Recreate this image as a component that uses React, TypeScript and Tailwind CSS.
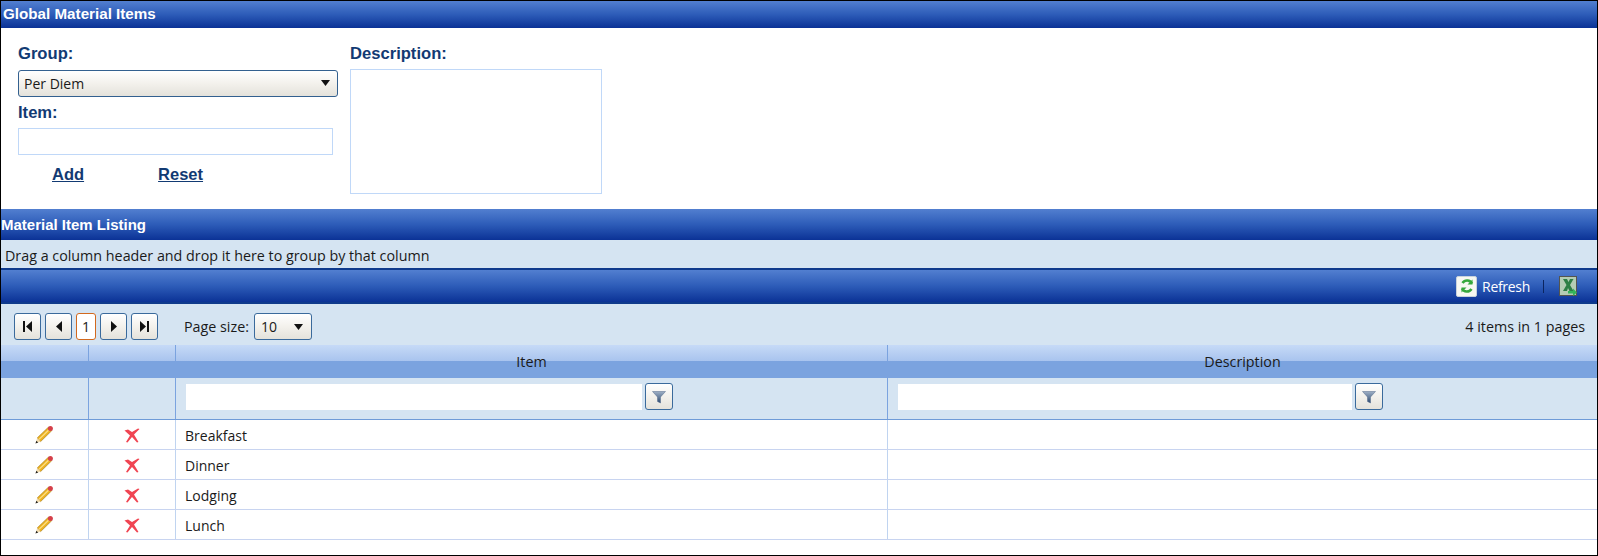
import { ReactNode } from 'react';

const labelClass = "text-[16.6px] font-bold leading-none text-[#123a73] font-['Liberation_Sans',sans-serif]";
const linkClass = "text-[16.5px] font-bold leading-none text-[#123a73] underline font-['Liberation_Sans',sans-serif]";
const barClass = 'bg-[linear-gradient(#527fd0,#2d5cb8_50%,#0b3296)]';
const buttonClass =
  'flex items-center rounded-[3px] border border-[#3a6a9c] bg-[linear-gradient(#ffffff,#f3f1ec_50%,#e4e2db)]';

const rows = ['Breakfast', 'Dinner', 'Lodging', 'Lunch'];

function Triangle({ dir }: { dir: 'left' | 'right' | 'down' }) {
  if (dir === 'down') {
    return (
      <svg width="9" height="6" viewBox="0 0 9 6">
        <path d="M0 0h9L4.500 6z" fill="#111" />
      </svg>
    );
  }
  return (
    <svg width="6" height="11" viewBox="0 0 6 11">
      <path d={dir === 'left' ? 'M6 0v11L0 5.500z' : 'M0 0v11L6 5.500z'} fill="#111" />
    </svg>
  );
}

function PageButton({ children }: { children: ReactNode }) {
  return <div className={`${buttonClass} h-[27px] w-[27px] justify-center`}>{children}</div>;
}

function FilterIcon() {
  return (
    <svg width="14" height="14" viewBox="0 0 14 14">
      <defs>
        <linearGradient id="funnel" x1="0" y1="0" x2="0" y2="1">
          <stop offset="0" stopColor="#9fb0c6" />
          <stop offset="1" stopColor="#2c4a70" />
        </linearGradient>
      </defs>
      <path d="M0.500 1.500h13L8.500 7v6l-3-1.500V7z" fill="url(#funnel)" stroke="#52688a" strokeWidth="0.500" />
    </svg>
  );
}

function Pencil() {
  return (
    <svg width="20" height="20" viewBox="0 0 20 20">
      <path d="M3.200 13 14.400 2.200l3.400 3.400L6.600 16.600z" fill="#eeb321" stroke="#a87a12" strokeWidth="0.700" />
      <path d="M5 14.400 15.800 4" stroke="#fbe08a" strokeWidth="1.200" />
      <path d="M3.200 13 1.500 18.500l5.100-1.900z" fill="#f3dcae" />
      <path d="M2.300 15.800 1.500 18.500l2.700-.9z" fill="#222" />
      <circle cx="16.400" cy="3.400" r="2.500" fill="#d5404a" />
    </svg>
  );
}

function RedX() {
  return (
    <svg width="16" height="15" viewBox="0 0 16 15">
      <path
        d="M0.500 2.500 4 1.500l4 2.500 6-3.500 1.500.5L10 6.500l4.500 7.500-1.500.5L8 9 3.500 14.500 2 14 6 7.500z"
        fill="#f04552"
      />
    </svg>
  );
}

function RefreshIcon() {
  return (
    <div className="flex h-[21px] w-[21px] items-center justify-center rounded-[2px] border border-[#c8d2dc] bg-[#f7f8f2]">
      <svg width="16" height="16" viewBox="0 0 16 16" fill="none" stroke="#36a83c" strokeWidth="2.600">
        <path d="M13 5.500A5.500 5.500 0 0 0 3.500 5" />
        <path d="M3 10.500A5.500 5.500 0 0 0 12.500 11" />
        <path d="M13.500 1.500v5h-5z" fill="#36a83c" stroke="none" />
        <path d="M2.500 14.500v-5h5z" fill="#36a83c" stroke="none" />
      </svg>
    </div>
  );
}

function ExcelIcon() {
  return (
    <svg width="18" height="20" viewBox="0 0 18 20">
      <rect x="0.500" y="0.500" width="17" height="19" fill="#b4ccb4" stroke="#55554f" />
      <path d="M4 3h4l1.500 3L11 3h3.500l-3.500 6 3.500 6h-4l-1.500-3L8 15H4l3.500-6z" fill="#2e7f45" />
      <path d="M9 15h5v-2.500l4 4-4 3.500v-2.500H9z" fill="#35b45a" />
    </svg>
  );
}

function FilterCell({ inputWidth }: { inputWidth: string }) {
  return (
    <div className="flex items-center gap-[3px] border-l border-[#7ba3df] pb-[4px] pl-[10px]">
      <div className={`h-[26px] bg-white ${inputWidth}`} />
      <div className={`${buttonClass} h-[27px] w-[28px] justify-center`}>
        <FilterIcon />
      </div>
    </div>
  );
}

export default function App() {
  return (
    <div className="box-border flex h-[556px] w-[1598px] flex-col overflow-hidden border border-black bg-white font-['Open_Sans',sans-serif] text-[14.3px] text-[#1a1a1a]">
      <div className={`${barClass} flex h-[27px] items-center pl-[2px] font-['Liberation_Sans',sans-serif] text-[15.2px] font-bold text-white`}>
        Global Material Items
      </div>

      <div className="flex h-[181px] pl-[17px] pt-[18px]">
        <div className="w-[320px]">
          <div className={labelClass}>Group:</div>
          <div className="mt-[7px] flex h-[27px] items-center justify-between rounded-[3px] border border-[#33608f] bg-[linear-gradient(#ffffff,#f3f1ec_50%,#e4e2db)] pl-[5px] pr-[7px]">
            <span className="text-[14px]">Per Diem</span>
            <Triangle dir="down" />
          </div>
          <div className={`${labelClass} mt-[8px]`}>Item:</div>
          <div className="mt-[7px] h-[27px] w-[315px] border border-[#c0d8f8]" />
          <div className="mt-[11px] flex pl-[34px]">
            <span className={linkClass}>Add</span>
            <span className={`${linkClass} ml-[74px]`}>Reset</span>
          </div>
        </div>
        <div className="ml-[12px]">
          <div className={labelClass}>Description:</div>
          <div className="mt-[6px] h-[125px] w-[252px] border border-[#c0d8f8]" />
        </div>
      </div>

      <div className={`${barClass} flex h-[31px] items-center pt-[1px] font-['Liberation_Sans',sans-serif] text-[15px] font-bold text-white`}>
        Material Item Listing
      </div>

      <div className="flex h-[28px] items-center bg-[#d5e4f2] pl-[4px] pt-[3px]">
        Drag a column header and drop it here to group by that column
      </div>

      <div className={`${barClass} flex h-[36px] items-center justify-end border-y-2 border-t-[#0f3a8c] border-b-[#0f3a8c] pr-[20px]`}>
        <RefreshIcon />
        <span className="ml-[5px] text-[14px] tracking-[-0.3px] text-white">Refresh</span>
        <div className="ml-[13px] h-[13px] w-px bg-[#0b2560]" />
        <div className="ml-[15px] flex">
          <ExcelIcon />
        </div>
      </div>

      <div className="flex h-[41px] items-center bg-[#d5e4f2] pl-[13px] pr-[12px] pt-[4px]">
        <div className="flex gap-[4px]">
          <PageButton>
            <svg width="9" height="11" viewBox="0 0 9 11">
              <path d="M0 0h2v11H0zM9 0v11L3 5.500z" fill="#111" />
            </svg>
          </PageButton>
          <PageButton>
            <Triangle dir="left" />
          </PageButton>
          <div className="flex h-[27px] w-[20px] items-center justify-center rounded-[3px] border border-[#d2691e] bg-white text-[14px]">
            1
          </div>
          <PageButton>
            <Triangle dir="right" />
          </PageButton>
          <PageButton>
            <svg width="9" height="11" viewBox="0 0 9 11">
              <path d="M0 0v11l6-5.500zM7 0h2v11H7z" fill="#111" />
            </svg>
          </PageButton>
        </div>
        <span className="ml-[26px]">Page size:</span>
        <div className={`${buttonClass} ml-[5px] h-[27px] w-[58px] justify-between pl-[6px] pr-[8px] text-[14px]`}>
          10
          <Triangle dir="down" />
        </div>
        <span className="ml-auto">4 items in 1 pages</span>
      </div>

      <div className="grid h-[33px] grid-cols-[87px_87px_712px_1fr] bg-[linear-gradient(#c6daf7,#a9c4ee_48%,#7ba3df_48%,#7ba3df)] text-center">
        <div />
        <div className="border-l border-[#7ba3df]" />
        <div className="flex items-center justify-center border-l border-[#7ba3df]">Item</div>
        <div className="flex items-center justify-center border-l border-[#7ba3df]">Description</div>
      </div>

      <div className="grid h-[42px] grid-cols-[87px_87px_712px_1fr] border-b border-[#6f9bd8] bg-[#d5e4f2]">
        <div />
        <div className="border-l border-[#7ba3df]" />
        <FilterCell inputWidth="w-[456px]" />
        <FilterCell inputWidth="w-[454px]" />
      </div>

      {rows.map((row) => (
        <div key={row} className="grid h-[30px] grid-cols-[87px_87px_712px_1fr] border-b border-[#c8d4f0] text-[14px]">
          <div className="flex items-center justify-center pt-[1px]">
            <span className="mr-px flex">
              <Pencil />
            </span>
          </div>
          <div className="flex items-center justify-center border-l border-[#c0d4f0] pt-[2px]">
            <RedX />
          </div>
          <div className="flex items-center border-l border-[#c0d4f0] pl-[9px] pt-[2px]">{row}</div>
          <div className="border-l border-[#c0d4f0]" />
        </div>
      ))}
    </div>
  );
}
